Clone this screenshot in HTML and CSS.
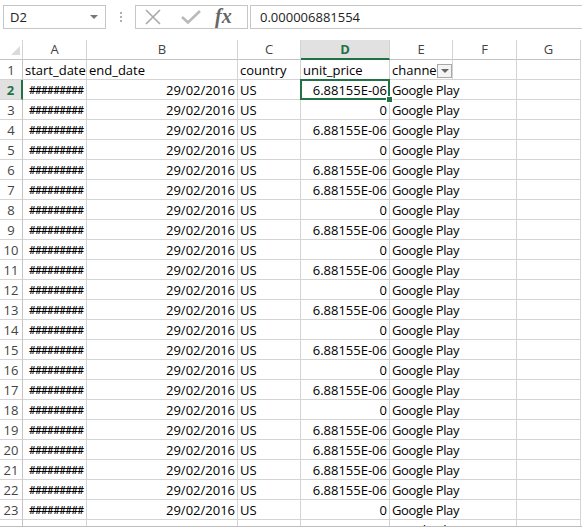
FILE: index.html
```
<!DOCTYPE html>
<html>
<head>
<meta charset="utf-8">
<link rel="stylesheet" href="styles.css">
</head>
<body>
<div class="app">
  <div class="fbar">
    <div class="namebox"><span>D2</span><span class="nb-arrow"></span></div>
    <div class="grip"><i></i><i></i><i></i></div>
    <div class="fxbox">
      <svg class="ic-x" width="18" height="18" viewBox="0 0 18 18"><path d="M2 2 L16 16 M16 2 L2 16" stroke="#a9a9a9" stroke-width="1.6" fill="none"/></svg>
      <svg class="ic-ok" width="20" height="16" viewBox="0 0 20 16"><path d="M1 8 L7 13.5 L19 2" stroke="#b9b9b9" stroke-width="2.6" fill="none"/></svg>
      <span class="fx">fx</span>
    </div>
    <div class="finput">0.000006881554</div>
  </div>
  <div class="sheetwrap">
    <div class="sheet">
      <div class="h corner"><svg width="22" height="19" viewBox="0 0 22 19"><polygon points="11,15 20,15 20,6" fill="#dadada"/></svg></div>
      <div class="h">A</div><div class="h">B</div><div class="h">C</div><div class="h selcol">D</div><div class="h">E</div><div class="h">F</div><div class="h">G</div>

      <div class="r">1</div><div class="c">start_date</div><div class="c">end_date</div><div class="c">country</div><div class="c">unit_price</div><div class="c filt">channel<span class="fbtn"></span></div><div class="c"></div><div class="c"></div>

      <div class="r selrow">2</div><div class="c hs">#########</div><div class="c n">29/02/2016</div><div class="c">US</div><div class="c n active">6.88155E-06</div><div class="c e">Google Play</div><div class="c"></div><div class="c"></div>
      <div class="r">3</div><div class="c hs">#########</div><div class="c n">29/02/2016</div><div class="c">US</div><div class="c n">0</div><div class="c e">Google Play</div><div class="c"></div><div class="c"></div>
      <div class="r">4</div><div class="c hs">#########</div><div class="c n">29/02/2016</div><div class="c">US</div><div class="c n">6.88155E-06</div><div class="c e">Google Play</div><div class="c"></div><div class="c"></div>
      <div class="r">5</div><div class="c hs">#########</div><div class="c n">29/02/2016</div><div class="c">US</div><div class="c n">0</div><div class="c e">Google Play</div><div class="c"></div><div class="c"></div>
      <div class="r">6</div><div class="c hs">#########</div><div class="c n">29/02/2016</div><div class="c">US</div><div class="c n">6.88155E-06</div><div class="c e">Google Play</div><div class="c"></div><div class="c"></div>
      <div class="r">7</div><div class="c hs">#########</div><div class="c n">29/02/2016</div><div class="c">US</div><div class="c n">6.88155E-06</div><div class="c e">Google Play</div><div class="c"></div><div class="c"></div>
      <div class="r">8</div><div class="c hs">#########</div><div class="c n">29/02/2016</div><div class="c">US</div><div class="c n">0</div><div class="c e">Google Play</div><div class="c"></div><div class="c"></div>
      <div class="r">9</div><div class="c hs">#########</div><div class="c n">29/02/2016</div><div class="c">US</div><div class="c n">6.88155E-06</div><div class="c e">Google Play</div><div class="c"></div><div class="c"></div>
      <div class="r">10</div><div class="c hs">#########</div><div class="c n">29/02/2016</div><div class="c">US</div><div class="c n">0</div><div class="c e">Google Play</div><div class="c"></div><div class="c"></div>
      <div class="r">11</div><div class="c hs">#########</div><div class="c n">29/02/2016</div><div class="c">US</div><div class="c n">6.88155E-06</div><div class="c e">Google Play</div><div class="c"></div><div class="c"></div>
      <div class="r">12</div><div class="c hs">#########</div><div class="c n">29/02/2016</div><div class="c">US</div><div class="c n">0</div><div class="c e">Google Play</div><div class="c"></div><div class="c"></div>
      <div class="r">13</div><div class="c hs">#########</div><div class="c n">29/02/2016</div><div class="c">US</div><div class="c n">6.88155E-06</div><div class="c e">Google Play</div><div class="c"></div><div class="c"></div>
      <div class="r">14</div><div class="c hs">#########</div><div class="c n">29/02/2016</div><div class="c">US</div><div class="c n">0</div><div class="c e">Google Play</div><div class="c"></div><div class="c"></div>
      <div class="r">15</div><div class="c hs">#########</div><div class="c n">29/02/2016</div><div class="c">US</div><div class="c n">6.88155E-06</div><div class="c e">Google Play</div><div class="c"></div><div class="c"></div>
      <div class="r">16</div><div class="c hs">#########</div><div class="c n">29/02/2016</div><div class="c">US</div><div class="c n">0</div><div class="c e">Google Play</div><div class="c"></div><div class="c"></div>
      <div class="r">17</div><div class="c hs">#########</div><div class="c n">29/02/2016</div><div class="c">US</div><div class="c n">6.88155E-06</div><div class="c e">Google Play</div><div class="c"></div><div class="c"></div>
      <div class="r">18</div><div class="c hs">#########</div><div class="c n">29/02/2016</div><div class="c">US</div><div class="c n">0</div><div class="c e">Google Play</div><div class="c"></div><div class="c"></div>
      <div class="r">19</div><div class="c hs">#########</div><div class="c n">29/02/2016</div><div class="c">US</div><div class="c n">6.88155E-06</div><div class="c e">Google Play</div><div class="c"></div><div class="c"></div>
      <div class="r">20</div><div class="c hs">#########</div><div class="c n">29/02/2016</div><div class="c">US</div><div class="c n">6.88155E-06</div><div class="c e">Google Play</div><div class="c"></div><div class="c"></div>
      <div class="r">21</div><div class="c hs">#########</div><div class="c n">29/02/2016</div><div class="c">US</div><div class="c n">6.88155E-06</div><div class="c e">Google Play</div><div class="c"></div><div class="c"></div>
      <div class="r">22</div><div class="c hs">#########</div><div class="c n">29/02/2016</div><div class="c">US</div><div class="c n">6.88155E-06</div><div class="c e">Google Play</div><div class="c"></div><div class="c"></div>
      <div class="r">23</div><div class="c hs">#########</div><div class="c n">29/02/2016</div><div class="c">US</div><div class="c n">0</div><div class="c e">Google Play</div><div class="c"></div><div class="c"></div>
      <div class="r">24</div><div class="c hs">#########</div><div class="c n">29/02/2016</div><div class="c">US</div><div class="c n">6.88155E-06</div><div class="c e">Google Play</div><div class="c"></div><div class="c"></div>
    </div>
  </div>
  <div class="bottombar"></div>
</div>
</body>
</html>
```
FILE: styles.css
```
html, body {
  margin: 0;
  padding: 0;
  background: #fff;
  overflow: hidden;
}
.app {
  width: 582px;
  height: 531px;
  display: flex;
  flex-direction: column;
  font-family: "Open Sans", "Liberation Sans", sans-serif;
  font-size: 13px;
  color: #000;
}
.fbar {
  height: 40px;
  flex: none;
  display: flex;
  align-items: flex-start;
  padding-top: 5px;
  box-sizing: border-box;
}
.namebox {
  margin-left: 3px;
  width: 103px;
  height: 24px;
  box-sizing: border-box;
  border: 1px solid #c6c6c6;
  display: flex;
  align-items: center;
  justify-content: space-between;
  padding: 0 7px 0 6px;
  color: #222;
  font-size: 13px;
}
.nb-arrow {
  width: 0;
  height: 0;
  border-left: 4px solid transparent;
  border-right: 4px solid transparent;
  border-top: 4px solid #777;
}
.grip {
  width: 29px;
  height: 24px;
  display: flex;
  flex-direction: column;
  align-items: center;
  justify-content: center;
  gap: 2px;
}
.grip i {
  display: block;
  width: 2px;
  height: 2px;
  background: #b0b0b0;
}
.fxbox {
  width: 113px;
  height: 24px;
  box-sizing: border-box;
  border: 1px solid #c6c6c6;
  display: flex;
  align-items: center;
  padding-left: 8px;
}
.ic-x { margin-right: 19px; }
.ic-ok { margin-right: 14px; margin-top: -1px; }
.fx {
  font-family: "Liberation Serif", serif;
  font-style: italic;
  font-weight: bold;
  font-size: 20px;
  color: #666;
  line-height: 1;
  margin-top: -3px;
}
.finput {
  margin-left: 2px;
  flex: 1;
  height: 24px;
  box-sizing: border-box;
  border: 1px solid #c6c6c6;
  border-right: none;
  padding-left: 9px;
  line-height: 22px;
  color: #222;
}
.sheetwrap {
  flex: 1;
  overflow: hidden;
}
.sheet {
  display: grid;
  grid-template-columns: 23px 64px 151px 63px 89px 63px 64px 64px;
  grid-auto-rows: 20px;
}
.sheet > div {
  box-sizing: border-box;
  border-right: 1px solid #d4d4d4;
  border-bottom: 1px solid #d4d4d4;
  white-space: nowrap;
  overflow: hidden;
  line-height: 19px;
  padding-top: 1px;
}
.h {
  text-align: center;
  color: #444;
  background: #fff;
  padding-top: 0 !important;
  border-bottom-color: #c4c4c4 !important;
}
.corner {
  padding: 0 !important;
}
.corner svg { display: block; }
.r {
  text-align: center;
  color: #444;
  border-right-color: #c4c4c4 !important;
}
.selcol {
  background: #e1e1e1;
  color: #217346;
  font-weight: bold;
  border-bottom: 2px solid #217346 !important;
}
.selrow {
  background: #e1e1e1;
  color: #217346;
  font-weight: bold;
  border-right: 2px solid #217346 !important;
}
.c {
  padding-left: 2px;
  padding-right: 2px;
}
.n {
  text-align: right;
}
.hs {
  font-size: 10.5px;
  letter-spacing: -0.75px;
  font-weight: 600;
  padding-left: 6px !important;
}
.e {
  overflow: visible !important;
  border-right-color: transparent !important;
  letter-spacing: -0.35px;
}
.filt {
  position: relative;
}
.fbtn {
  position: absolute;
  right: 0;
  top: 4px;
  width: 15px;
  height: 14px;
  box-sizing: border-box;
  border: 1px solid #a8a8a8;
  background: #f4f4f4;
}
.fbtn::after {
  content: "";
  position: absolute;
  left: 3px;
  top: 4px;
  border-left: 4px solid transparent;
  border-right: 4px solid transparent;
  border-top: 4px solid #666;
}
.active {
  position: relative;
  overflow: visible !important;
}
.active::after {
  content: "";
  position: absolute;
  left: -1px;
  top: -1px;
  right: -1px;
  bottom: -1px;
  border: 2px solid #217346;
}
.active::before {
  content: "";
  position: absolute;
  right: -4px;
  bottom: -4px;
  width: 5px;
  height: 5px;
  background: #217346;
  border: 1px solid #fff;
  z-index: 2;
}
.bottombar {
  height: 4px;
  flex: none;
  border-top: 1px solid #bdbdbd;
  background: #fff;
}
```
